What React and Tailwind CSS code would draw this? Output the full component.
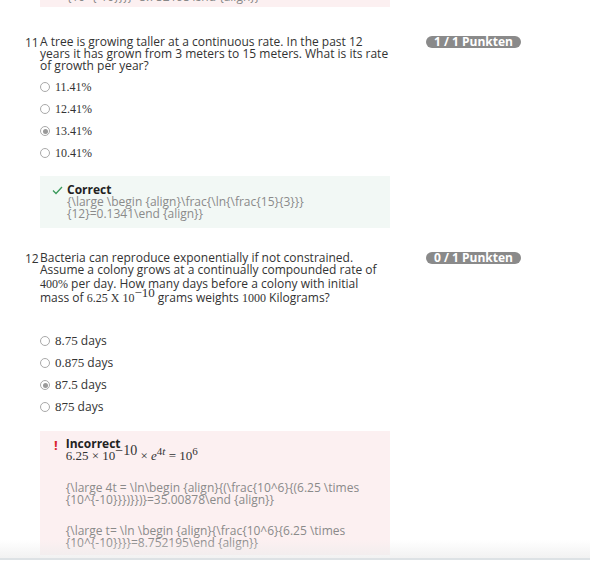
import React from 'react';

const sans = { fontFamily: '"Open Sans", "Noto Sans", sans-serif' };
const serif = { fontFamily: '"Liberation Serif", "DejaVu Serif", serif' };

const Radio = ({ checked }) => (
  <span className="w-[10px] h-[10px] rounded-full border border-[#a9a9a9] bg-white flex items-center justify-center shrink-0">
    {checked && <span className="w-[5px] h-[5px] rounded-full bg-[#9a9a9a]" />}
  </span>
);

const Badge = ({ children }) => (
  <span
    className="flex items-center h-[12px] px-[8px] rounded-full bg-[#8a8a8a] text-white text-[12px] font-bold leading-none whitespace-nowrap"
    style={sans}
  >
    {children}
  </span>
);

const Option = ({ label, checked, isSerifOnly }) => (
  <div className="flex items-center h-[22px] gap-[5px]">
    <Radio checked={checked} />
    <span className="text-[12px] text-[#333]" style={isSerifOnly ? serif : undefined}>
      {label}
    </span>
  </div>
);

const M = ({ children, size = 'text-[12px]' }) => <span className={size} style={serif}>{children}</span>;

export default function App() {
  return (
    <div className="w-[590px] h-[562px] bg-white relative overflow-hidden" style={sans}>
      {/* tail of previous feedback */}
      <div className="ml-[40px] w-[350px] h-[7px] bg-[#fcf0f1] overflow-hidden">
        <div className="pl-[27px] -mt-[9px] text-[12px] leading-[12px] text-[#888]">
          {'{10^{-10}}}}=8.752195\\end {align}}'}
        </div>
      </div>

      {/* Question 11 */}
      <div className="flex mt-[29px] pl-[25px]">
        <div className="w-[15px] text-[12px] leading-[12px] text-[#333] pt-[1px]">11</div>
        <div className="w-[352px]">
          <p className="text-[12px] leading-[12px] text-[#333]">
            A tree is growing taller at a continuous rate. In the past 12 years it has grown from 3 meters to 15 meters. What is its rate of growth per year?
          </p>
          <div className="mt-[4px] flex flex-col">
            <Option label="11.41%" isSerifOnly />
            <Option label="12.41%" isSerifOnly />
            <Option label="13.41%" checked isSerifOnly />
            <Option label="10.41%" isSerifOnly />
          </div>
          <div className="mt-[12px] w-[350px] bg-[#f2f8f5] h-[52px] pt-[8px] pl-[12px] flex gap-[4px]">
            <svg width="11" height="9" viewBox="0 0 11 9" className="mt-[2px] shrink-0">
              <path d="M1 4.5 L4 7.5 L10 1" fill="none" stroke="#3a9a5b" strokeWidth="1.3" />
            </svg>
            <div className="text-[12px] leading-[12px]">
              <div className="font-bold text-[#222]">Correct</div>
              <div className="text-[#8a8a8a]">{'{\\large \\begin {align}\\frac{\\ln{\\frac{15}{3}}}'}</div>
              <div className="text-[#8a8a8a]">{'{12}=0.1341\\end {align}}'}</div>
            </div>
          </div>
        </div>
        <div className="ml-[34px] flex items-start">
          <Badge>1 / 1 Punkten</Badge>
        </div>
      </div>

      {/* Question 12 */}
      <div className="flex mt-[24px] pl-[25px]">
        <div className="w-[15px] text-[12px] leading-[12px] text-[#333] pt-[1px]">12</div>
        <div className="w-[352px]">
          <div className="text-[12px] leading-[12px] text-[#333]">
            <div>Bacteria can reproduce exponentially if not constrained.</div>
            <div>Assume a colony grows at a continually compounded rate of</div>
            <div className="mt-[2px]"><M>400%</M> per day. How many days before a colony with initial</div>
            <div className="mt-[2px]">
              mass of <M>6.25 X 10</M>
              <span className="text-[13px] relative -top-[5px]" style={serif}>−10</span> grams weights <M>1000</M> Kilograms?
            </div>
          </div>
          <div className="mt-[26px] flex flex-col">
            <Option label={<><M size="text-[13px]">8.75</M> days</>} />
            <Option label={<><M size="text-[13px]">0.875</M> days</>} />
            <Option label={<><M size="text-[13px]">87.5</M> days</>} checked />
            <Option label={<><M size="text-[13px]">875</M> days</>} />
          </div>
          <div className="mt-[13px] w-[350px] bg-[#fcf0f1] h-[124px] pt-[7px] pl-[14px] flex gap-[8px]">
            <span className="text-[#d9232e] font-bold text-[13px] leading-[12px] mt-[1px]">!</span>
            <div className="text-[12px] leading-[12px]">
              <div className="font-bold text-[#222]">Incorrect</div>
              <div className="text-[#333] text-[13px]" style={serif}>
                6.25 × 10<span className="text-[14px] relative -top-[5px]">−10</span> × <i>e</i>
                <span className="text-[11px] relative -top-[5px]">4<i>t</i></span> = 10<span className="text-[11px] relative -top-[5px]">6</span>
              </div>
              <div className="text-[#8a8a8a] mt-[20px]">{'{\\large 4t = \\ln\\begin {align}{(\\frac{10^6}{(6.25 \\times'}</div>
              <div className="text-[#8a8a8a]">{'{10^{-10}}})}})}=35.00878\\end {align}}'}</div>
              <div className="text-[#8a8a8a] mt-[19px]">{'{\\large t= \\ln \\begin {align}{\\frac{10^6}{6.25 \\times'}</div>
              <div className="text-[#8a8a8a]">{'{10^{-10}}}}=8.752195\\end {align}}'}</div>
            </div>
          </div>
        </div>
        <div className="ml-[34px] flex items-start">
          <Badge>0 / 1 Punkten</Badge>
        </div>
      </div>

      {/* sticky footer shade */}
      <div className="absolute left-0 right-0 bottom-0 h-[22px] pointer-events-none">
        <div className="h-[18px] bg-gradient-to-b from-transparent to-[#ececec]/70" />
        <div className="h-[2px] bg-[#dde2e5]" />
        <div className="h-[2px] bg-white" />
      </div>
    </div>
  );
}
